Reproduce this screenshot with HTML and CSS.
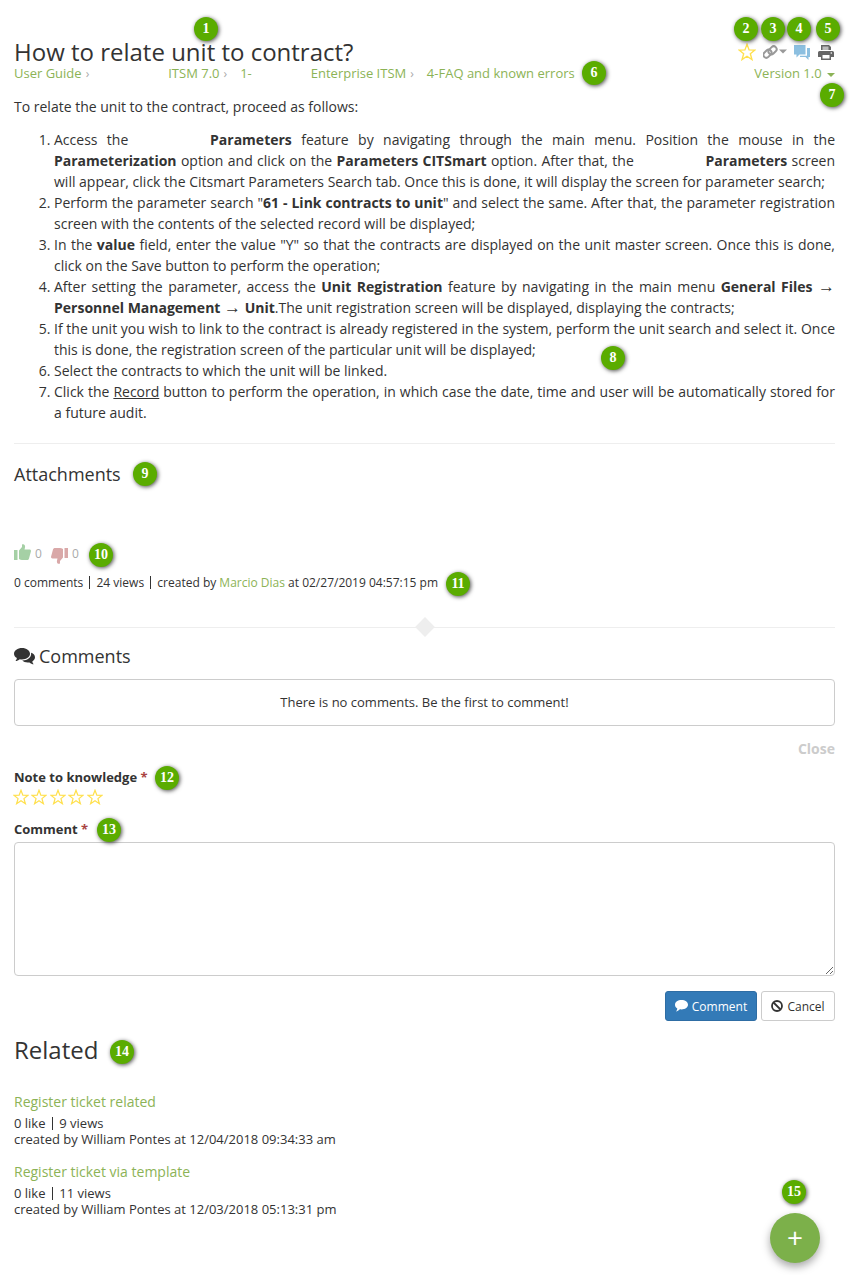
FILE: index.html
```html
<!DOCTYPE html>
<html lang="en">
<head>
  <meta charset="UTF-8" />
  <meta name="viewport" content="width=device-width, initial-scale=1.0" />
  <title>How to relate unit to contract?</title>
  <link rel="stylesheet" href="styles.css">
</head>
<body>
  <svg class="defs" width="0" height="0">
    <symbol id="star" viewBox="0 0 20 20">
      <polygon points="10,1.500 12.300,7.700 18.800,7.900 13.700,12 15.500,18.400 10,14.700 4.500,18.400 6.300,12 1.200,7.900 7.700,7.700" fill="#fff" stroke="#ffe04d" stroke-width="1.500" stroke-linejoin="miter"/>
    </symbol>
  </svg>

  <div class="page">
    <header class="doc-head">
      <div class="doc-title">
        <h1>How to relate unit to contract?</h1>
        <nav class="crumbs">
          <a>User Guide</a><span class="sep">›</span><span class="gap-a"></span>
          <a>ITSM 7.0</a><span class="sep">›</span>
          <a class="crumb-one">1-</a><span class="gap-b"></span>
          <a>Enterprise ITSM</a><span class="sep">›</span>
          <a>4-FAQ and known errors</a>
        </nav>
      </div>
      <div class="doc-tools">
        <div class="tool-row">
          <svg width="18" height="18"><use href="#star"/></svg>
          <svg width="24" height="16" viewBox="0 0 24 16">
            <g fill="none" stroke="#999" stroke-width="2" transform="rotate(-45 7 8)">
              <rect x="-0.500" y="4.500" width="9" height="5.800" rx="2.900"/>
              <rect x="5.500" y="5.700" width="9" height="5.800" rx="2.900"/>
            </g>
            <polygon points="16,5.500 24,5.500 20,9.500" fill="#999"/>
          </svg>
          <svg width="16" height="15" viewBox="0 0 16 15">
            <path d="M0 0h11.500v9.500H5.500l-3 3v-3H0z" fill="#8cbfe0"/>
            <path d="M13 3h3v9h-1.500v3l-3-3H6v-1.300h7z" fill="#8cbfe0"/>
          </svg>
          <svg class="tool-print" width="16" height="15" viewBox="0 0 16 15">
            <path d="M3 0h8l2 2v3H3z M1.500 6h13A1.500 1.500 0 0 1 16 7.500V12h-3v3H3v-3H0V7.500A1.500 1.500 0 0 1 1.500 6z" fill="#666"/>
            <rect x="4.500" y="10" width="7" height="3.500" fill="#fff"/>
            <rect x="4.500" y="1.500" width="6" height="3.500" fill="#bbb"/>
            <circle cx="13.300" cy="8" r=".8" fill="#fff"/>
          </svg>
        </div>
        <a class="version">Version 1.0 <span class="caret"></span></a>
      </div>
    </header>

    <p class="intro">To relate the unit to the contract, proceed as follows:</p>

    <ol class="steps">
      <li>Access the <span class="blank-wide"></span> <b>Parameters</b> feature by navigating through the main menu. Position the mouse in the <b>Parameterization</b> option and click on the <b>Parameters CITSmart</b> option. After that, the <span class="blank-wide"></span> <b>Parameters</b> screen will appear, click the Citsmart Parameters Search tab. Once this is done, it will display the screen for parameter search;</li>
      <li>Perform the parameter search "<b>61 - Link contracts to unit</b>" and select the same. After that, the parameter registration screen with the contents of the selected record will be displayed;</li>
      <li>In the <b>value</b> field, enter the value "Y" so that the contracts are displayed on the unit master screen. Once this is done, click on the Save button to perform the operation;</li>
      <li>After setting the parameter, access the <b>Unit Registration</b> feature by navigating in the main menu <b>General Files <span class="arrow">→</span> Personnel Management <span class="arrow">→</span> Unit</b>.The unit registration screen will be displayed, displaying the contracts;</li>
      <li>If the unit you wish to link to the contract is already registered in the system, perform the unit search and select it. Once this is done, the registration screen of the particular unit will be displayed;</li>
      <li>Select the contracts to which the unit will be linked.</li>
      <li>Click the <u>Record</u> button to perform the operation, in which case the date, time and user will be automatically stored for a future audit.</li>
    </ol>

    <hr class="rule" />

    <h3 class="attach-title">Attachments</h3>

    <div class="votes">
      <svg class="thumb-up" width="17" height="16" viewBox="0 0 17 16"><path d="M0 6h3.500v10H0z M5 6.500 8 3V.5c2-1 3.500.5 3 3L10.500 5.500h5c1.200 0 1.700 1 1.400 2L15 14.500c-.3 1-1 1.500-2 1.500H8c-1 0-2-.5-3-1z" fill="#a5d0a5"/></svg>
      <span class="vote-count">0</span>
      <svg class="thumb-down" width="17" height="16" viewBox="0 0 17 16"><path d="M17 10h-3.500V0H17z M12 9.500 9 13v2.500c-2 1-3.500-.5-3-3l.5-2h-5c-1.200 0-1.700-1-1.400-2L2 1.500C2.300.5 3 0 4 0h5c1 0 2 .5 3 1z" fill="#d9a8a8"/></svg>
      <span class="vote-count">0</span>
    </div>

    <p class="meta">0 comments <i class="bar"></i> 24 views <i class="bar"></i> created by <a>Marcio Dias</a> at 02/27/2019 04:57:15 pm</p>

    <div class="divider"><span class="diamond"></span></div>

    <h3 class="comments-title">
      <svg width="21" height="17" viewBox="0 0 21 17"><path d="M8 0c4.400 0 8 2.500 8 5.700s-3.600 5.700-8 5.700c-.8 0-1.500-.1-2.200-.2C4.500 12.300 3 13 1.500 13c.8-.8 1.300-1.800 1.400-2.900C1.100 9 0 7.500 0 5.700 0 2.500 3.600 0 8 0z" fill="#333"/><path d="M17.300 4.800c2.200.9 3.700 2.500 3.700 4.500 0 1.700-1 3.100-2.700 4.100.1 1 .6 2 1.400 2.800-1.500 0-3-.7-4.200-1.800-.6.100-1.200.1-1.800.1-2.300 0-4.300-.8-5.500-2 5.200.1 9.500-3 8.900-7.700z" fill="#333"/></svg>
      Comments
    </h3>

    <div class="empty-box">There is no comments. Be the first to comment!</div>

    <div class="close-row"><a>Close</a></div>

    <label class="field-label">Note to knowledge <span class="req">*</span></label>
    <div class="rating">
      <svg width="16" height="16"><use href="#star"/></svg>
      <svg width="16" height="16"><use href="#star"/></svg>
      <svg width="16" height="16"><use href="#star"/></svg>
      <svg width="16" height="16"><use href="#star"/></svg>
      <svg width="16" height="16"><use href="#star"/></svg>
    </div>

    <label class="field-label comment-label">Comment <span class="req">*</span></label>
    <textarea class="comment-box"></textarea>

    <div class="form-actions">
      <button class="btn btn-primary" type="button">
        <svg width="13" height="12" viewBox="0 0 13 12"><path d="M6.500 0C10.100 0 13 2 13 4.700S10.100 9.400 6.500 9.400c-.6 0-1.100 0-1.600-.1C3.800 10.500 2.300 11.300.9 11.500c.8-.8 1.300-1.800 1.400-3C.9 7.700 0 6.300 0 4.700 0 2 2.900 0 6.500 0z" fill="#fff"/></svg>
        Comment
      </button>
      <button class="btn btn-default" type="button">
        <svg width="12" height="12" viewBox="0 0 12 12"><circle cx="6" cy="6" r="5" fill="none" stroke="#333" stroke-width="1.800"/><path d="M2.500 2.500l7 7" stroke="#333" stroke-width="1.800"/></svg>
        Cancel
      </button>
    </div>

    <h2 class="related-title">Related</h2>

    <div class="related-item">
      <a class="related-link">Register ticket related</a>
      <p>0 like <i class="bar"></i> 9 views<br />created by William Pontes at 12/04/2018 09:34:33 am</p>
    </div>
    <div class="related-item">
      <a class="related-link">Register ticket via template</a>
      <p>0 like <i class="bar"></i> 11 views<br />created by William Pontes at 12/03/2018 05:13:31 pm</p>
    </div>

    <a class="fab">+</a>

    <!-- numbered callouts -->
    <span class="pin pin-1">1</span>
    <span class="pin pin-2">2</span>
    <span class="pin pin-3">3</span>
    <span class="pin pin-4">4</span>
    <span class="pin pin-5">5</span>
    <span class="pin pin-6">6</span>
    <span class="pin pin-7">7</span>
    <span class="pin pin-8">8</span>
    <span class="pin pin-9">9</span>
    <span class="pin pin-10">10</span>
    <span class="pin pin-11">11</span>
    <span class="pin pin-12">12</span>
    <span class="pin pin-13">13</span>
    <span class="pin pin-14">14</span>
    <span class="pin pin-15">15</span>
  </div>
</body>
</html>
```

FILE: styles.css
```css
* {
  box-sizing: border-box;
}
html, body {
  margin: 0;
  background: #fff;
}
body {
  font-family: "Open Sans", sans-serif;
  font-size: 13px;
  line-height: 21px;
  color: #333;
}
a {
  color: #8cb356;
  text-decoration: none;
}
p {
  margin: 0;
}
.defs {
  position: absolute;
}
.page {
  position: relative;
  height: 1275px;
  padding: 39px 16px 0 14px;
  overflow: hidden;
}

.doc-head {
  display: flex;
  justify-content: space-between;
}
h1 {
  margin: 0;
  font-size: 24px;
  line-height: 26px;
  font-weight: 400;
}
.crumbs {
  display: flex;
  align-items: center;
  height: 18px;
  margin-top: -1px;
  white-space: nowrap;
}
.sep {
  margin: 0 0 0 4px;
  color: #aaa;
  font-size: 12px;
}
.gap-a {
  width: 79px;
}
.gap-b {
  width: 59px;
}
.crumbs .sep + a {
  margin-left: 13px;
}
.doc-tools {
  display: flex;
  flex-direction: column;
  align-items: flex-end;
}
.tool-row {
  display: flex;
  align-items: center;
  justify-content: flex-end;
  gap: 7px;
  height: 26px;
}
.tool-print {
  margin: 0 1px;
}
.version {
  height: 18px;
  line-height: 18px;
  margin-top: -1px;
}
.caret {
  display: inline-block;
  width: 0;
  height: 0;
  margin-left: 2px;
  vertical-align: middle;
  border-top: 4px solid #8cb356;
  border-left: 4px solid transparent;
  border-right: 4px solid transparent;
}

.intro {
  margin-top: 14px;
  font-size: 14px;
}
.steps {
  margin: 12px 0 0;
  padding-left: 40px;
  font-size: 14px;
  text-align: justify;
}
.blank-wide {
  display: inline-block;
  width: 63px;
}
.arrow {
  font-family: "Liberation Sans", sans-serif;
  font-size: 17px;
  font-weight: 400;
  line-height: 0;
}
.rule {
  margin: 20px 0 0;
  border: 0;
  border-top: 1px solid #eee;
}
.attach-title {
  margin: 18px 0 0;
  font-size: 18px;
  line-height: 24px;
  font-weight: 400;
}
.votes {
  display: flex;
  align-items: center;
  gap: 4px;
  height: 20px;
  margin-top: 57px;
}
.vote-count {
  font-size: 12px;
  color: #aaa;
  margin-right: 5px;
}
.thumb-up {
  margin-bottom: 3px;
}
.thumb-down {
  margin-top: 6px;
}
.meta {
  margin-top: 10px;
  font-size: 12px;
  line-height: 20px;
}
.bar {
  display: inline-block;
  width: 1px;
  height: 13px;
  margin: 0 3px;
  vertical-align: -2px;
  background: #333;
}
.divider {
  position: relative;
  height: 1px;
  margin-top: 34px;
  background: #eee;
}
.diamond {
  position: absolute;
  left: 404px;
  top: -7px;
  width: 14px;
  height: 14px;
  background: #eee;
  transform: rotate(45deg);
}
.comments-title {
  display: flex;
  align-items: center;
  gap: 4px;
  margin: 16px 0 0;
  font-size: 18px;
  line-height: 24px;
  font-weight: 400;
}
.empty-box {
  height: 47px;
  margin-top: 11px;
  border: 1px solid #ccc;
  border-radius: 4px;
  line-height: 45px;
  text-align: center;
}
.close-row {
  margin-top: 12px;
  font-size: 14px;
  text-align: right;
  font-weight: 700;
}
.close-row a {
  color: #ccc;
}
.field-label {
  display: block;
  margin-top: 8px;
  font-weight: 700;
  line-height: 20px;
}
.req {
  color: #a94442;
}
.rating {
  display: flex;
  height: 20px;
  margin-left: -1px;
  align-items: center;
  gap: 2.400px;
}
.comment-label {
  margin-top: 12px;
}
.comment-box {
  display: block;
  width: 100%;
  height: 134px;
  margin-top: 3px;
  border: 1px solid #ccc;
  border-radius: 4px;
}
.form-actions {
  display: flex;
  justify-content: flex-end;
  gap: 4px;
  margin-top: 15px;
}
.btn {
  display: flex;
  align-items: center;
  justify-content: center;
  gap: 4px;
  height: 30px;
  padding: 0;
  border: 1px solid #ccc;
  border-radius: 3px;
  background: #fff;
  color: #333;
  font-family: inherit;
  font-size: 12px;
}
.btn-primary {
  width: 92px;
  background: #337ab7;
  border-color: #2e6da4;
  color: #fff;
}
.btn-default {
  width: 74px;
}
.related-title {
  margin: 12px 0 0;
  font-size: 24px;
  line-height: 34px;
  font-weight: 400;
}
.related-item {
  margin-top: 15px;
  font-size: 13px;
  line-height: 16px;
}
.related-title + .related-item {
  margin-top: 25px;
}
.related-link {
  display: block;
  font-size: 14px;
  line-height: 20px;
  margin-bottom: 3px;
}

.fab {
  position: absolute;
  left: 770px;
  top: 1213px;
  width: 50px;
  height: 50px;
  border-radius: 50%;
  background: #7cb04a;
  box-shadow: 0 4px 8px rgba(0, 0, 0, 0.35);
  color: #fff;
  font-size: 28px;
  line-height: 48px;
  text-align: center;
}

.pin {
  position: absolute;
  width: 24px;
  height: 24px;
  border-radius: 50%;
  background: #5aac00;
  box-shadow: 1px 1px 4px rgba(0, 0, 0, 0.7);
  color: #fff;
  font-family: "Liberation Serif", serif;
  font-size: 14px;
  font-weight: 700;
  line-height: 24px;
  text-align: center;
}
.pin-1 { left: 194px; top: 17px; }
.pin-2 { left: 734px; top: 17px; }
.pin-3 { left: 761px; top: 17px; }
.pin-4 { left: 787px; top: 17px; }
.pin-5 { left: 816px; top: 17px; }
.pin-6 { left: 582px; top: 61px; }
.pin-7 { left: 820px; top: 83px; }
.pin-8 { left: 601px; top: 346px; }
.pin-9 { left: 133px; top: 462px; }
.pin-10 { left: 89px; top: 543px; }
.pin-11 { left: 446px; top: 572px; }
.pin-12 { left: 155px; top: 766px; }
.pin-13 { left: 97px; top: 818px; }
.pin-14 { left: 110px; top: 1040px; }
.pin-15 { left: 782px; top: 1180px; }
```
